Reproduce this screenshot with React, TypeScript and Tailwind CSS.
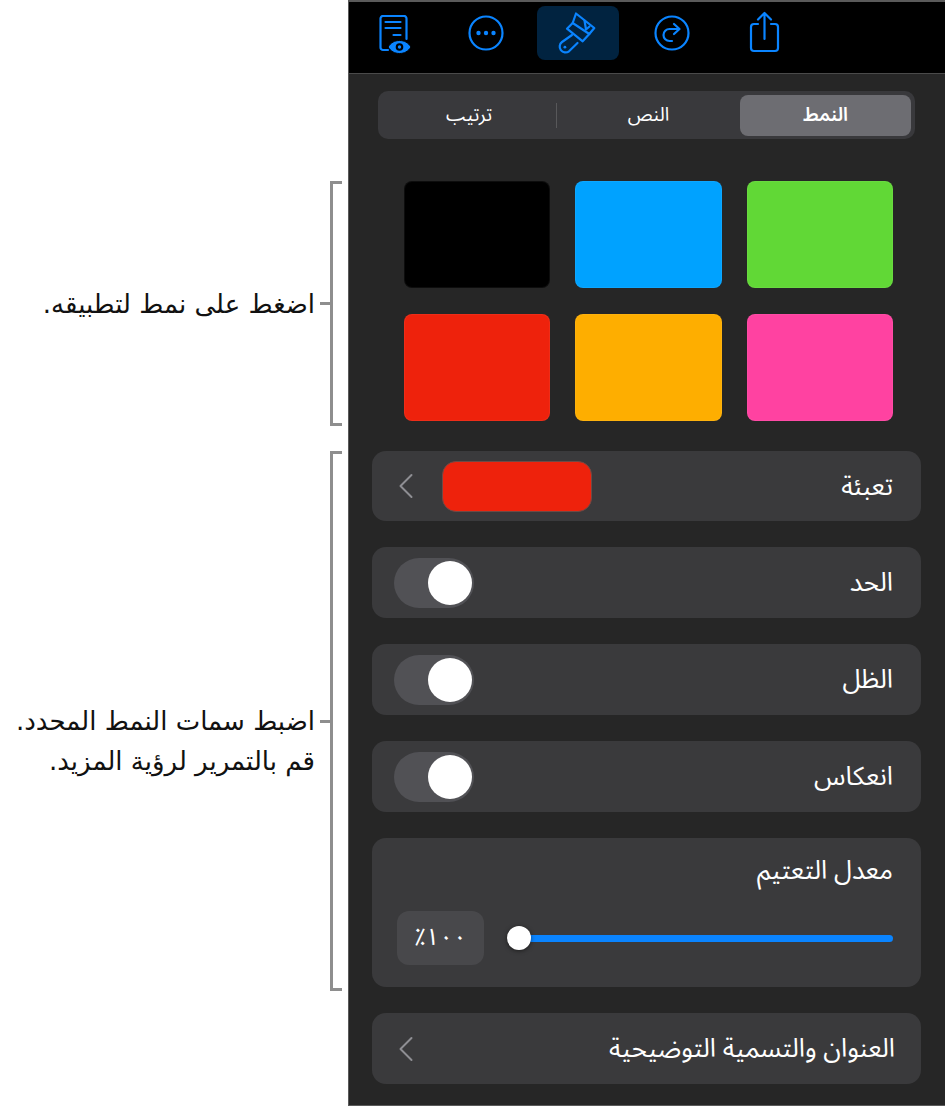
const arabic = "font-['Noto_Sans_Arabic','DejaVu_Sans','Noto_Sans',sans-serif]"

function DocEyeIcon() {
  return (
    <svg width="40" height="40" viewBox="0 0 40 40" fill="none" stroke="#0a84ff" strokeWidth="2.2" strokeLinecap="round">
      <path d="M10 35H5a2.500 2.500 0 0 1-2.500-2.500V3.500A2.500 2.500 0 0 1 5 1h21a2.500 2.500 0 0 1 2.500 2.500V24" />
      <path d="M7.500 7h15M7.500 13h15M15.500 20h7" />
      <path d="M10 32c3-4.500 6.500-6.500 11.500-6.500S30 27.500 33 32c-3 4.500-6.500 6.500-11.500 6.500S13 36.500 10 32z" fill="#0a84ff" stroke="#000" strokeWidth="1" />
      <circle cx="21.500" cy="32" r="3.800" fill="#000" stroke="none" />
      <circle cx="21.500" cy="32" r="1.700" fill="#0a84ff" stroke="none" />
    </svg>
  )
}

function MoreIcon() {
  return (
    <svg width="36" height="36" viewBox="0 0 36 36" fill="none">
      <circle cx="18" cy="18" r="16.500" stroke="#0a84ff" strokeWidth="2.200" />
      <circle cx="10.500" cy="18" r="2.200" fill="#0a84ff" />
      <circle cx="18" cy="18" r="2.200" fill="#0a84ff" />
      <circle cx="25.500" cy="18" r="2.200" fill="#0a84ff" />
    </svg>
  )
}

function BrushIcon() {
  return (
    <svg width="40" height="42" viewBox="0 0 40 42" fill="none" stroke="#0a84ff" strokeWidth="2.200" strokeLinejoin="round" strokeLinecap="round">
      <path d="M14.700 11L18 1.500 36.300 16l-5 6" />
      <path d="M26.500 8.500l1.500 9 3.500-3" />
      <path d="M14.700 11L9 16.700l15.700 12.600 6.600-7.300z" />
      <path d="M14 23L4 30a5.800 5.800 0 0 0 7 9.300L19.500 31" />
      <circle cx="6.900" cy="35.200" r="1.400" fill="#0a84ff" stroke="none" />
    </svg>
  )
}

function RedoIcon() {
  return (
    <svg width="36" height="36" viewBox="0 0 36 36" fill="none" stroke="#0a84ff" strokeWidth="2.200" strokeLinecap="round" strokeLinejoin="round">
      <circle cx="18" cy="18" r="16.500" />
      <path d="M18 26h-2.500a6 6 0 0 1 0-12H25" />
      <path d="M20 9l5.500 5-5.500 5" />
    </svg>
  )
}

function ShareIcon() {
  return (
    <svg width="32" height="42" viewBox="0 0 32 42" fill="none" stroke="#0a84ff" strokeWidth="2.200" strokeLinecap="round" strokeLinejoin="round">
      <path d="M10 13H6a3 3 0 0 0-3 3v21a3 3 0 0 0 3 3h21a3 3 0 0 0 3-3V16a3 3 0 0 0-3-3h-4" />
      <path d="M16.500 28V2M10 8.500L16.500 2 23 8.500" />
    </svg>
  )
}

function Chevron() {
  return (
    <svg width="16" height="26" viewBox="0 0 16 26" fill="none" stroke="#8e8e93" strokeWidth="2" strokeLinecap="round" strokeLinejoin="round">
      <path d="M13.500 2L2.500 13l11 11" />
    </svg>
  )
}

function Toggle() {
  return (
    <div className="flex h-[50px] w-[80px] items-center justify-end rounded-full bg-[#515155] pr-[2px]">
      <div className="h-[44px] w-[44px] rounded-full bg-white" />
    </div>
  )
}

function Row({ label, children }: { label: string; children: React.ReactNode }) {
  return (
    <div className="flex h-[71px] items-center justify-between rounded-[14px] bg-[#3a3a3c] pl-[22px] pr-[28px]">
      {children}
      <span className="text-[26px] text-white">{label}</span>
    </div>
  )
}

const swatches = ['#000000', '#00a2ff', '#61d836', '#ee220c', '#feae00', '#ff42a1']

export default function App() {
  return (
    <div className={`flex h-[1108px] w-[945px] overflow-hidden bg-white ${arabic}`} >
      {/* callouts */}
      <div className="w-[348px] pl-[10px] pr-[6px] pt-[181px] font-['DejaVu_Sans',sans-serif]">
        <div className="flex h-[245px] items-center justify-end">
          <span dir="rtl" className="mr-[5px] whitespace-nowrap text-[26px] leading-[40px] text-[#111]">اضغط على نمط لتطبيقه.</span>
          <div className="h-[3px] w-[10px] bg-[#8e8e8e]" />
          <div className="h-full w-[12px] border-y-[3px] border-l-[3px] border-[#8e8e8e]" />
        </div>
        <div className="mt-[25px] flex h-[540px] items-center justify-end">
          <div className="flex items-start pt-[40px]">
            <div dir="rtl" className="mr-[5px] whitespace-nowrap text-right text-[26px] leading-[40px] text-[#111]">
              <div>اضبط سمات النمط المحدد.</div>
              <div>قم بالتمرير لرؤية المزيد.</div>
            </div>
            <div className="mt-[19px] h-[3px] w-[10px] bg-[#8e8e8e]" />
          </div>
          <div className="h-full w-[12px] border-y-[3px] border-l-[3px] border-[#8e8e8e]" />
        </div>
      </div>

      {/* inspector panel */}
      <div className="flex h-[1106px] w-[597px] flex-col border-b border-l border-t-2 border-[#5a5a5a] bg-[#262626]">
        <div className="flex h-[72px] items-start gap-[10px] border-b border-[#4a4a4a] bg-black pl-[4px] pt-[4px]">
          <div className="flex h-[54px] w-[82px] items-center justify-center pl-[8px] pt-[4px]"><DocEyeIcon /></div>
          <div className="flex h-[54px] w-[82px] items-center justify-center"><MoreIcon /></div>
          <div className="flex h-[54px] w-[82px] items-center justify-center rounded-lg bg-[#012340]"><BrushIcon /></div>
          <div className="flex h-[54px] w-[82px] items-center justify-center pl-[4px]"><RedoIcon /></div>
          <div className="flex h-[54px] w-[82px] items-center justify-center pb-[3px] pl-[3px]"><ShareIcon /></div>
        </div>

        <div className="flex flex-col pl-[23px] pr-[24px] pt-[17px]">
          <div className="ml-[6px] flex h-[48px] w-[537px] items-center rounded-[10px] bg-[#39393c] px-[4px] text-[19px] text-white">
            <div className="flex flex-1 justify-center">ترتيب</div>
            <div className="h-[25px] w-px bg-[#58585a]" />
            <div className="flex w-[183px] justify-center">النص</div>
            <div className="flex h-[41px] w-[171px] items-center justify-center rounded-lg bg-[#6d6d72] font-semibold">النمط</div>
          </div>

          <div className="mt-[42px] grid grid-cols-3 gap-x-[25px] gap-y-[26px] pl-[32px] pr-[28px]">
            {swatches.map((c) => (
              <div key={c} className="h-[107px] rounded-lg border border-white/5" style={{ backgroundColor: c }} />
            ))}
          </div>

          <div className="mt-[30px] flex flex-col gap-[26px]">
            <div className="flex h-[70px] items-center justify-between rounded-[14px] bg-[#3a3a3c] pl-[26px] pr-[28px]">
              <div className="flex items-center gap-[28px]">
                <Chevron />
                <div className="h-[51px] w-[150px] rounded-[14px] border border-[#6f4a46] bg-[#ee220c]" />
              </div>
              <span className="text-[26px] text-white">تعبئة</span>
            </div>
            <Row label="الحد"><Toggle /></Row>
            <Row label="الظل"><Toggle /></Row>
            <Row label="انعكاس"><Toggle /></Row>

            <div className="flex h-[149px] flex-col rounded-[14px] bg-[#3a3a3c] pb-[22px] pl-[25px] pr-[28px] pt-[16px]">
              <div dir="rtl" className="text-[26px] leading-[34px] text-white">معدل التعتيم</div>
              <div className="mt-auto flex items-center">
                <div className="flex h-[54px] w-[87px] items-center justify-center rounded-xl bg-[#48484b] text-[24px] text-white">٪١٠٠</div>
                <div className="ml-[23px] flex flex-1 items-center">
                  <div className="z-10 h-[24px] w-[24px] shrink-0 rounded-full bg-white shadow-[0_1px_4px_rgba(0,0,0,0.5)]" />
                  <div className="-ml-[1px] h-[7px] flex-1 rounded-r-full bg-[#0a84ff]" />
                </div>
              </div>
            </div>

            <div className="flex h-[71px] items-center justify-between rounded-[14px] bg-[#3a3a3c] pl-[26px] pr-[26px]">
              <Chevron />
              <span dir="rtl" className="text-[26px] text-white">العنوان والتسمية التوضيحية</span>
            </div>
          </div>
        </div>
      </div>
    </div>
  )
}
